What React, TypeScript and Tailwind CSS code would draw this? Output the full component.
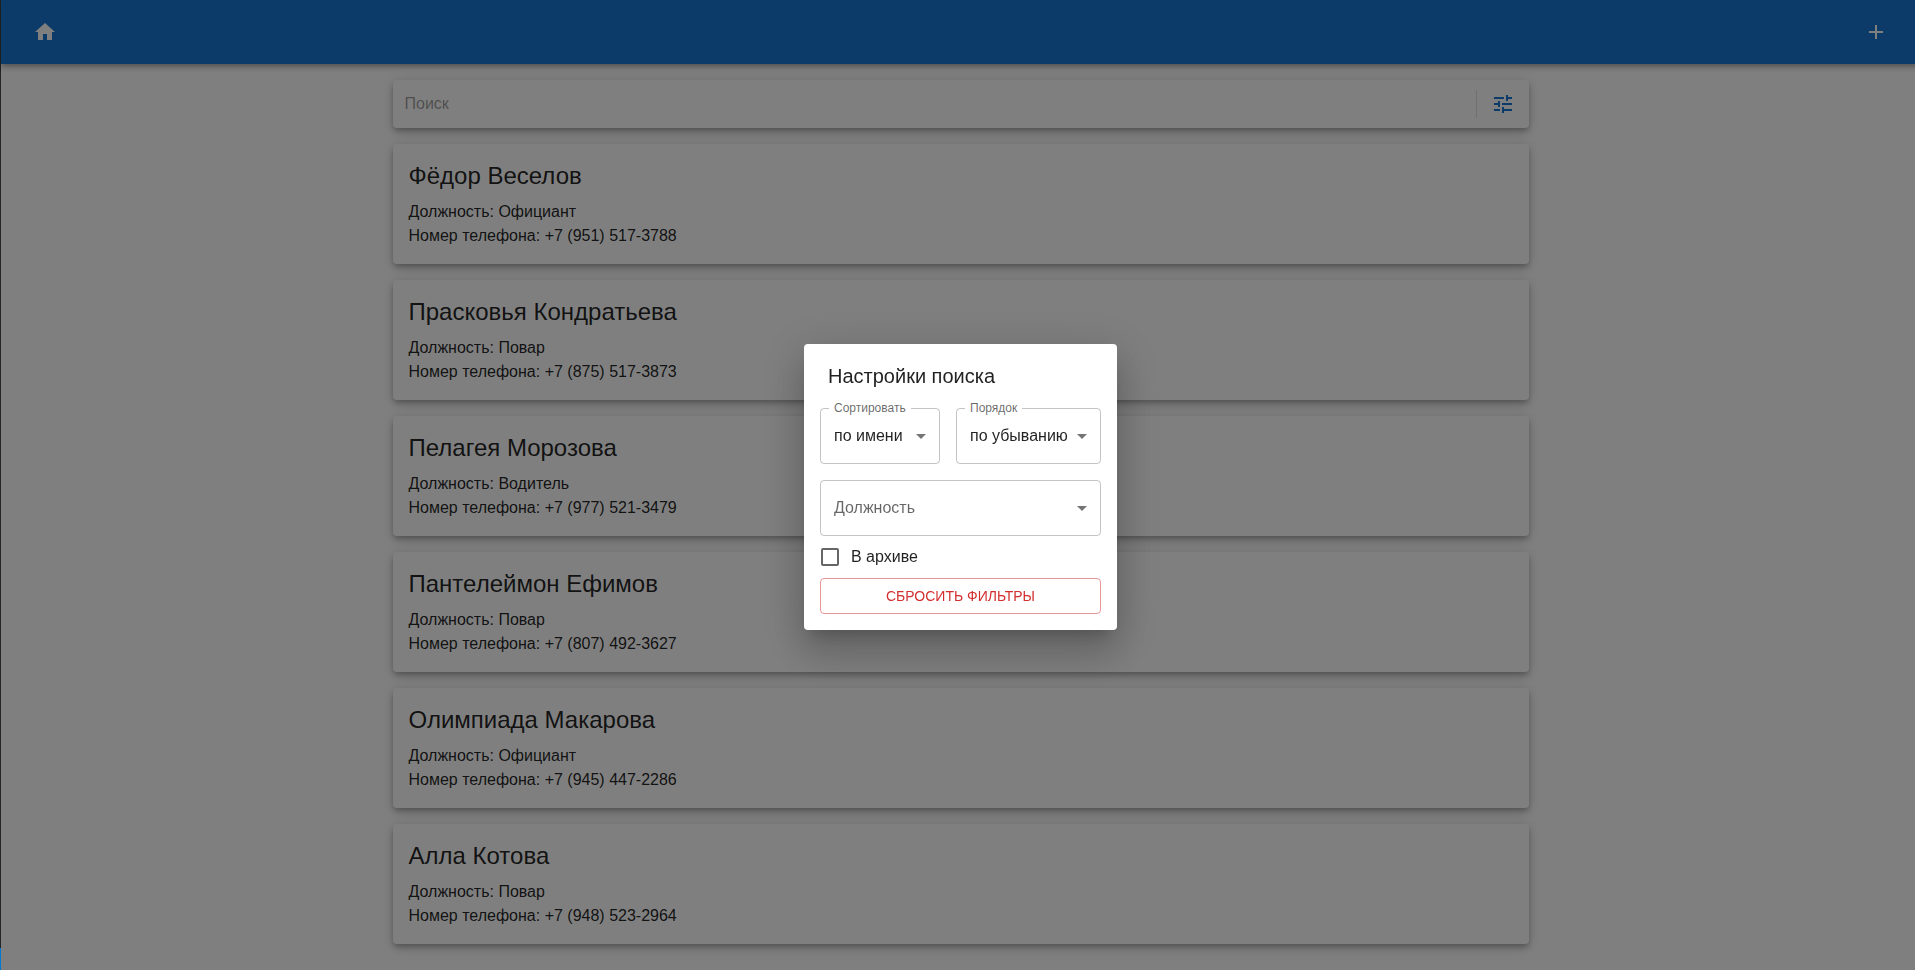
import { useState } from 'react';

type Employee = { name: string; role: string; phone: string };

const employees: Employee[] = [
  { name: 'Фёдор Веселов', role: 'Официант', phone: '+7 (951) 517-3788' },
  { name: 'Прасковья Кондратьева', role: 'Повар', phone: '+7 (875) 517-3873' },
  { name: 'Пелагея Морозова', role: 'Водитель', phone: '+7 (977) 521-3479' },
  { name: 'Пантелеймон Ефимов', role: 'Повар', phone: '+7 (807) 492-3627' },
  { name: 'Олимпиада Макарова', role: 'Официант', phone: '+7 (945) 447-2286' },
  { name: 'Алла Котова', role: 'Повар', phone: '+7 (948) 523-2964' },
];

const icons = {
  home: 'M10 20v-6h4v6h5v-8h3L12 3 2 12h3v8z',
  add: 'M19 13h-6v6h-2v-6H5v-2h6V5h2v6h6v2z',
  tune: 'M3 17v2h6v-2H3zM3 5v2h10V5H3zm10 16v-2h8v-2h-8v-2h-2v6h2zM7 9v2H3v2h4v2h2V9H7zm14 4v-2H11v2h10zm-6-4h2V7h4V5h-4V3h-2v6z',
  arrow: 'M7 10l5 5 5-5z',
};

function Icon({ name, className = '' }: { name: keyof typeof icons; className?: string }) {
  return (
    <svg viewBox="0 0 24 24" fill="currentColor" aria-hidden="true" className={`size-6 ${className}`}>
      <path d={icons[name]} />
    </svg>
  );
}

function Header() {
  return (
    <header className="flex h-16 items-center justify-between bg-[#1976d2] px-6 text-white shadow-[0_2px_4px_-1px_rgba(0,0,0,0.2),0_4px_5px_0_rgba(0,0,0,0.14),0_1px_10px_0_rgba(0,0,0,0.12)]">
      <a href="#home" aria-label="Главная" className="p-2">
        <Icon name="home" />
      </a>
      <button type="button" aria-label="Добавить" className="p-2">
        <Icon name="add" />
      </button>
    </header>
  );
}

function SearchBar() {
  return (
    <form className="flex h-12 items-center rounded bg-white px-1 shadow-[0_3px_5px_-1px_rgba(0,0,0,0.2),0_5px_8px_0_rgba(0,0,0,0.14),0_1px_14px_0_rgba(0,0,0,0.12)]">
      <input
        type="text"
        aria-label="Поиск"
        placeholder="Поиск"
        className="min-w-0 flex-1 px-2 outline-none placeholder:text-black/40"
      />
      <div className="mx-1 h-7 border-l border-black/12" />
      <button type="button" aria-label="Настройки поиска" className="p-2.5 text-[#1976d2]">
        <Icon name="tune" />
      </button>
    </form>
  );
}

function EmployeeCard({ name, role, phone }: Employee) {
  return (
    <li className="rounded bg-white p-4 shadow-[0_3px_5px_-1px_rgba(0,0,0,0.2),0_5px_8px_0_rgba(0,0,0,0.14),0_1px_14px_0_rgba(0,0,0,0.12)]">
      <h2 className="mb-2 text-2xl leading-8">{name}</h2>
      <p>Должность: {role}</p>
      <p>Номер телефона: {phone}</p>
    </li>
  );
}

type SelectFieldProps = { id: string; label: string; options: string[]; className?: string };

function SelectField({ id, label, options, className = '' }: SelectFieldProps) {
  const [value, setValue] = useState(options[0]);
  const shrunk = value !== '';
  return (
    <div className={`relative flex items-center ${className}`}>
      <select
        id={id}
        value={value}
        onChange={(e) => setValue(e.target.value)}
        className="h-14 w-full appearance-none rounded border border-black/23 bg-transparent pr-7 pl-[13px] outline-none"
      >
        {options.map((o) => (
          <option key={o} value={o}>
            {o}
          </option>
        ))}
      </select>
      <label
        htmlFor={id}
        className={
          shrunk
            ? 'pointer-events-none absolute -top-2 left-[9px] bg-white px-[5px] text-xs text-black/60'
            : 'pointer-events-none absolute top-4 left-3.5 text-black/60'
        }
      >
        {label}
      </label>
      <Icon name="arrow" className="pointer-events-none absolute top-4 right-[7px] text-black/54" />
    </div>
  );
}

function SearchSettings() {
  return (
    <div
      role="dialog"
      aria-modal="true"
      aria-labelledby="settings-title"
      className="w-[313px] rounded bg-white px-4 pb-4 shadow-[0_11px_15px_-7px_rgba(0,0,0,0.2),0_24px_38px_3px_rgba(0,0,0,0.14),0_9px_46px_8px_rgba(0,0,0,0.12)]"
    >
      <h2 id="settings-title" className="px-2 py-4 text-xl leading-8">
        Настройки поиска
      </h2>
      <div className="flex gap-4">
        <SelectField id="sort" label="Сортировать" options={['по имени']} className="w-[120px]" />
        <SelectField id="order" label="Порядок" options={['по убыванию']} className="flex-1" />
      </div>
      <SelectField id="role" label="Должность" options={['', 'Официант', 'Повар', 'Водитель']} className="mt-4" />
      <label className="flex h-[42px] items-center gap-3 pl-px">
        <input
          type="checkbox"
          className="size-[18px] appearance-none rounded-xs border-2 border-black/60 checked:bg-[#1976d2]"
        />
        В архиве
      </label>
      <button
        type="button"
        className="h-9 w-full rounded border border-[#d32f2f]/50 text-sm font-medium text-[#d32f2f] uppercase"
      >
        Сбросить фильтры
      </button>
    </div>
  );
}

export default function App() {
  return (
    <div className="flex min-h-screen overflow-hidden bg-white font-['Liberation_Sans',Arial,sans-serif] text-base text-black/87">
      <div className="flex w-px shrink-0 flex-col bg-[#252526]">
        <div className="mt-auto h-[22px] bg-[#0078d4]" />
      </div>
      <div className="-mr-[5px] min-w-0 flex-1">
        <Header />
        <main className="mx-auto flex max-w-[1136px] flex-col gap-4 py-4">
          <SearchBar />
          <ul className="flex flex-col gap-4">
            {employees.map((e) => (
              <EmployeeCard key={e.phone} {...e} />
            ))}
          </ul>
        </main>
      </div>
      <div className="fixed top-0 -right-[5px] -bottom-1 left-px flex items-center justify-center bg-black/50">
        <SearchSettings />
      </div>
    </div>
  );
}
